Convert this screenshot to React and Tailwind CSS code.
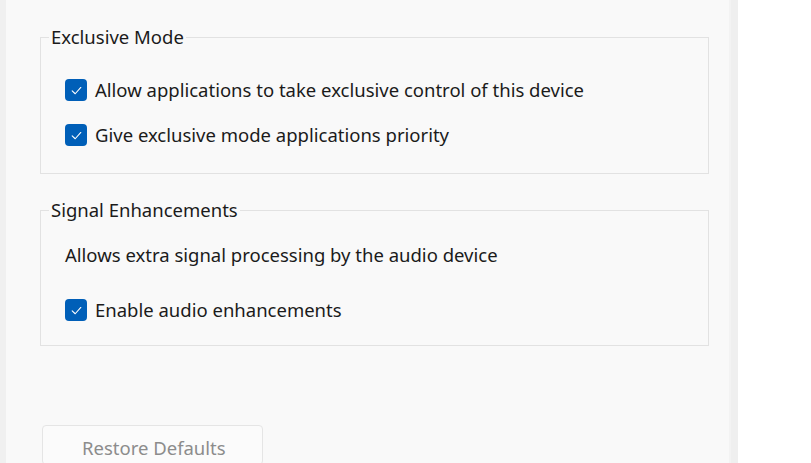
import React from "react";

function Check({ label }) {
  return (
    <label className="flex items-center gap-[8px] h-[24px]">
      <span className="w-[22px] h-[22px] rounded-[4px] bg-[#005fb8] flex items-center justify-center shrink-0">
        <svg width="13" height="13" viewBox="0 0 12 12" fill="none">
          <path d="M2 6.3 L4.8 9 L10 3.2" stroke="white" strokeWidth="1" strokeLinecap="round" strokeLinejoin="round" />
        </svg>
      </span>
      <span className="text-[#1b1b1b] leading-[24px]">{label}</span>
    </label>
  );
}

function Group({ title, children, className }) {
  return (
    <fieldset className={"border border-[#e2e2e2] mx-0 px-[24px] " + className}>
      <legend className="px-[2px] ml-[-16px] text-[#1b1b1b] leading-[22px]">{title}</legend>
      {children}
    </fieldset>
  );
}

export default function App() {
  return (
    <div
      className="w-[811px] h-[463px] bg-white flex overflow-hidden text-[18.5px]"
      style={{ fontFamily: '"Segoe UI", "Noto Sans", sans-serif' }}
    >
      <div className="w-[6px] bg-[#f0f0f0]" />
      <div className="w-[723px] bg-[#f9f9f9] pl-[34px] pr-[20px] pt-[26px] flex flex-col">
        <Group title="Exclusive Mode" className="h-[148px] shrink-0 pt-[30px] flex flex-col gap-[21px]">
          <Check label="Allow applications to take exclusive control of this device" />
          <Check label="Give exclusive mode applications priority" />
        </Group>
        <Group title="Signal Enhancements" className="mt-[25px] h-[147px] shrink-0 pt-[22px]">
          <div className="text-[#1b1b1b] leading-[24px]">Allows extra signal processing by the audio device</div>
          <div className="mt-[31px]">
            <Check label="Enable audio enhancements" />
          </div>
        </Group>
        <button className="mt-[79px] ml-[2px] w-[221px] h-[40px] shrink-0 border border-[#e5e5e5] rounded-[4px] bg-[#fbfbfb] text-[#8c8c8c] pt-[9px] leading-[26px] text-left pl-[39px] flex items-start">
          Restore Defaults
        </button>
      </div>
      <div className="w-[9px] bg-[#efefef] border-l-[2px] border-[#f3f3f3]" />
      <div className="flex-1 bg-white" />
    </div>
  );
}
